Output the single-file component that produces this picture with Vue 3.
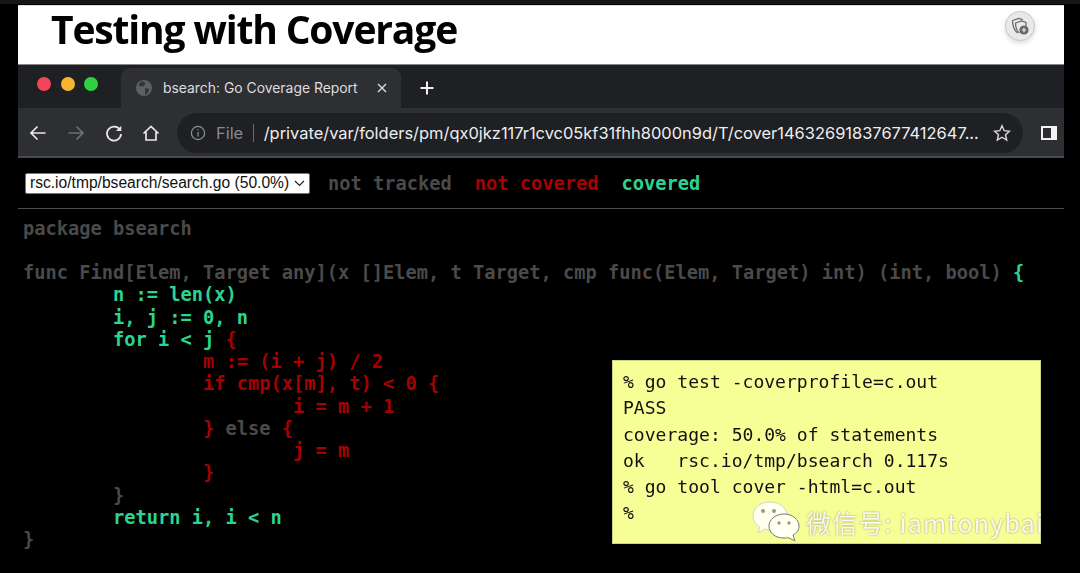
<template>
  <div class="screen">
    <div class="topstrip"></div>
    <div class="slide">
      <header class="title">
        <h1>Testing with Coverage</h1>
        <button class="fab" aria-label="add">
          <svg width="22" height="22" viewBox="0 0 22 22" fill="none" stroke="#666" stroke-width="1.2">
            <path d="M3.5 5.5 L10 3.5 L14 4.7 M3.5 5.5 C3.5 11 4.5 14.5 8.5 18" />
            <path d="M6.5 8 L12.5 6 L17 7.5 V11 M6.5 8 C6.5 12 7.5 15.5 10.5 18" />
            <circle cx="15" cy="15" r="4.6" fill="#666" stroke="none" />
            <path d="M15 12.8 V17.2 M12.8 15 H17.2" stroke="#eee" />
          </svg>
        </button>
      </header>

      <div class="tabstrip">
        <div class="lights">
          <span class="light red"></span>
          <span class="light yellow"></span>
          <span class="light green"></span>
        </div>
        <div class="tab">
          <svg class="globe" width="16" height="16" viewBox="0 0 16 16">
            <circle cx="8" cy="8" r="8" fill="#5f6064" />
            <path d="M6 1 L9.5 3 L8 6 L4 6.5 L2.5 4.5 Z M9 8 L13.5 9 L11.5 13.5 L9 15 Z" fill="#35363a" />
          </svg>
          <span class="tab-title">bsearch: Go Coverage Report</span>
          <svg class="close" width="10" height="10" viewBox="0 0 10 10" stroke="#dcdcdc" stroke-width="1.4">
            <path d="M1 1 L9 9 M9 1 L1 9" />
          </svg>
        </div>
        <svg class="plus" width="14" height="14" viewBox="0 0 14 14" stroke="#f0f0f0" stroke-width="2">
          <path d="M7 0.5 V13.5 M0.5 7 H13.5" />
        </svg>
      </div>

      <div class="toolbar">
        <svg class="nav" width="18" height="18" viewBox="0 0 18 18" fill="none" stroke="#e8e8e8" stroke-width="1.7">
          <path d="M16.5 9 H2 M8.5 2.5 L2 9 L8.5 15.5" />
        </svg>
        <svg class="nav" width="18" height="18" viewBox="0 0 18 18" fill="none" stroke="#6e6f72" stroke-width="1.7">
          <path d="M1.5 9 H16 M9.5 2.5 L16 9 L9.5 15.5" />
        </svg>
        <svg class="nav" width="18" height="18" viewBox="0 0 18 18" fill="none" stroke="#e8e8e8" stroke-width="1.8">
          <path d="M15 6 A7 7 0 1 0 16 10" />
          <path d="M16.3 1.8 V7 H11" fill="#e8e8e8" stroke="none" />
        </svg>
        <svg class="nav home" width="18" height="18" viewBox="0 0 18 18" fill="none" stroke="#e8e8e8" stroke-width="1.7">
          <path d="M1.5 9.5 L9 2.5 L16.5 9.5 M4 8 V16 H14 V8" />
        </svg>
        <div class="omnibox">
          <svg class="info" width="16" height="16" viewBox="0 0 16 16" fill="none" stroke="#8f9094" stroke-width="1.2">
            <circle cx="8" cy="8" r="6.6" />
            <path d="M8 7 V11.5 M8 4.3 V5.6" />
          </svg>
          <span class="file">File</span>
          <span class="sep"></span>
          <span class="url">/private/var/folders/pm/qx0jkz117r1cvc05kf31fhh8000n9d/T/cover14632691837677412647...</span>
          <svg class="star" width="18" height="18" viewBox="0 0 18 18" fill="none" stroke="#dcdcdc" stroke-width="1.4">
            <path d="M9 1.8 L11.2 6.7 L16.5 7.2 L12.5 10.7 L13.7 16 L9 13.2 L4.3 16 L5.5 10.7 L1.5 7.2 L6.8 6.7 Z" />
          </svg>
        </div>
        <span class="sidepanel"></span>
      </div>

      <main class="page">
        <div class="topbar">
          <div class="select">
            <span>rsc.io/tmp/bsearch/search.go (50.0%)</span>
            <svg width="11" height="7" viewBox="0 0 11 7" fill="none" stroke="#222" stroke-width="1.2">
              <path d="M1 1 L5.5 5.5 L10 1" />
            </svg>
          </div>
          <div class="legend">
            <span class="grey">not tracked</span>
            <span class="redtxt">not covered</span>
            <span class="greentxt">covered</span>
          </div>
        </div>
        <pre class="code"><span class="grey">package bsearch

func Find[Elem, Target any](x []Elem, t Target, cmp func(Elem, Target) int) (int, bool) </span><span class="greentxt">{
        n := len(x)
        i, j := 0, n
        for i &lt; j </span><span class="redtxt">{
                m := (i + j) / 2
                if cmp(x[m], t) &lt; 0 {
                        i = m + 1
                } </span><span class="grey">else </span><span class="redtxt">{
                        j = m
                }
</span><span class="grey">        }
</span><span class="greentxt">        return i, i &lt; n
</span><span class="grey">}</span></pre>
      </main>
    </div>

    <pre class="note">% go test -coverprofile=c.out
PASS
coverage: 50.0% of statements
ok   rsc.io/tmp/bsearch 0.117s
% go tool cover -html=c.out
%</pre>

    <div class="watermark">
      <svg class="wechat" width="48" height="42" viewBox="0 0 48 42">
        <path d="M18 1 C8 1 1 7 1 15 C1 20 4 24 8 26 L6 32 L13 28 C15 29 17 29 19 29 C30 29 35 22 35 15 C35 7 28 1 18 1 Z" fill="#fffff2" stroke="#bbb" stroke-width="0.6" />
        <path d="M32 13 C23 13 17 19 17 25 C17 32 23 37 32 37 C34 37 35 37 36 36.5 L43 40 L41 34 C45 32 47 29 47 25 C47 19 41 13 32 13 Z" fill="#fffff2" stroke="#777" stroke-width="1" />
        <circle cx="11" cy="10" r="2" fill="#9a9a80" />
        <circle cx="22" cy="10" r="2" fill="#9a9a80" />
        <circle cx="27" cy="22" r="1.7" fill="#9a9a80" />
        <circle cx="37" cy="22" r="1.7" fill="#9a9a80" />
      </svg>
      <span>微信号: iamtonybai</span>
    </div>
  </div>
</template>

<script setup>
</script>

<style>
html, body { margin: 0; background: #000; }
</style>

<style scoped>
.screen {
  position: relative;
  width: 1080px;
  height: 573px;
  background: #000;
  overflow: hidden;
}
.topstrip { height: 4px; background: #161616; }
.slide {
  width: 1046px;
  margin-left: 18px;
  display: flex;
  flex-direction: column;
  filter: blur(0.4px);
}
.title {
  height: 59px;
  margin-top: 1px;
  background: #fff;
  border-top: 1px solid #ddd;
  box-sizing: border-box;
  display: flex;
  align-items: center;
  justify-content: space-between;
  padding: 0 29px 0 33px;
}
.title h1 {
  margin: 0;
  font: 700 39px/1 "Open Sans", sans-serif;
  letter-spacing: -1.15px;
  color: #000;
  position: relative;
  top: -7px;
}
.fab {
  width: 30px;
  height: 30px;
  padding: 0;
  border-radius: 50%;
  border: 1px solid #c9c9c9;
  background: #e9e9e9;
  display: flex;
  align-items: center;
  justify-content: center;
  box-shadow: 0 2px 5px rgba(0,0,0,.15);
  position: relative;
  top: -9px;
}
.tabstrip {
  height: 44px;
  background: #1f2023;
  border-top: 1px solid #888;
  box-sizing: border-box;
  display: flex;
  align-items: flex-end;
}
.lights {
  display: flex;
  gap: 9.5px;
  width: 103px;
  box-sizing: border-box;
  padding: 0 0 17px 19px;
  align-self: flex-end;
}
.light { width: 14px; height: 14px; border-radius: 50%; }
.red { background: #f0455a; }
.yellow { background: #f6b52e; }
.green { background: #2fd33f; }
.tab {
  width: 280px;
  height: 40px;
  background: #2e2f33;
  border-radius: 9px 9px 0 0;
  display: flex;
  align-items: center;
  box-sizing: border-box;
  padding: 0 14px 0 15px;
}
.tab-title {
  margin-left: 11px;
  flex: 1;
  font: 13.9px/20px "Inter", "Liberation Sans", sans-serif;
  color: #dddddf;
  white-space: nowrap;
}
.plus { margin: 0 0 13px 19px; }
.toolbar {
  height: 50px;
  background: #2e2f33;
  border-bottom: 2px solid #4a4b4e;
  box-sizing: border-box;
  display: flex;
  align-items: center;
  padding: 2px 6px 0 11px;
}
.nav { margin-right: 20px; flex: none; }
.home { margin-left: -1px; }
.omnibox {
  flex: none;
  width: 846px;
  height: 40px;
  margin-left: -3px;
  border-radius: 20px;
  background: #1f2023;
  display: flex;
  align-items: center;
  box-sizing: border-box;
  padding: 0 12px 0 13px;
}
.info { flex: none; }
.file {
  margin-left: 10px;
  font: 16.4px "Inter", "Liberation Sans", sans-serif;
  color: #8a8b8f;
}
.sep { width: 1px; height: 18px; margin: 0 10px 0 9.5px; background: #6b6c70; flex: none; }
.url {
  flex: 1;
  min-width: 0;
  font: 16.45px "Inter", "Liberation Sans", sans-serif;
  color: #eeeeee;
  white-space: nowrap;
  overflow: hidden;
}
.star { flex: none; }
.sidepanel {
  margin-left: 18px;
  width: 8px;
  height: 10px;
  border: 2.5px solid #f2f2f2;
  border-right-width: 6px;
  flex: none;
}
.page { background: #000; }
.topbar {
  height: 51px;
  border-bottom: 1px solid #4d4d4d;
  box-sizing: border-box;
  display: flex;
  align-items: center;
  padding: 0 0 0 7px;
}
.select {
  width: 285px;
  height: 21px;
  background: #fff;
  border: 1px solid #777;
  border-radius: 2px;
  box-sizing: border-box;
  display: flex;
  align-items: center;
  justify-content: space-between;
  padding: 0 4px 0 4px;
  font: 15.6px "Liberation Sans", sans-serif;
  color: #111;
  white-space: nowrap;
}
.legend {
  margin-left: 18px;
  display: flex;
  gap: 23px;
  padding-top: 1px;
  font: 700 18.7px "DejaVu Sans Mono", monospace;
}
.grey { color: #4a4a4a; }
.redtxt { color: #a80000; }
.greentxt { color: #2bd590; }
.code {
  margin: 8.5px 0 0;
  padding-left: 5px;
  font: 700 18.7px/22.25px "DejaVu Sans Mono", monospace;
  tab-size: 8;
  white-space: pre;
}
.note {
  position: absolute;
  left: 612px;
  top: 360px;
  width: 429px;
  height: 184px;
  margin: 0;
  box-sizing: border-box;
  padding: 8px 10px;
  border: 1px solid #cfd37e;
  background: #f6fe96;
  color: #111;
  font: 18.06px/26.3px "DejaVu Sans Mono", monospace;
  filter: blur(0.3px);
}
.watermark {
  position: absolute;
  left: 752px;
  top: 500px;
  width: 292px;
  height: 44px;
  display: flex;
  align-items: center;
  overflow: hidden;
  white-space: nowrap;
  font: 25px "Noto Sans CJK SC", "Noto Sans", sans-serif;
  color: rgba(255,255,255,.92);
  text-shadow: 0 0 2px rgba(0,0,0,.45);
}
.wechat { flex: none; }
.watermark span { margin-left: 6px; letter-spacing: 1.2px; }
</style>
